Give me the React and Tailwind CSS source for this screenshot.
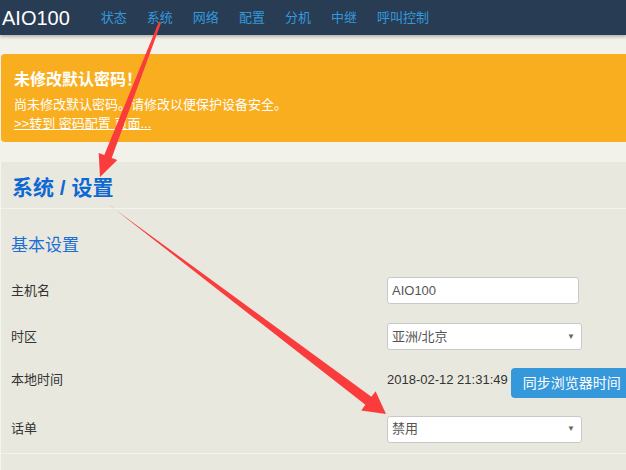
import React from 'react';

const font = { fontFamily: '"Liberation Sans", Arial, "Noto Sans CJK SC", sans-serif' };

const navItems = ['状态', '系统', '网络', '配置', '分机', '中继', '呼叫控制'];

function SelectBox({ value }) {
  return (
    <div className="w-[195px] h-[27px] bg-white border border-[#c9c9c9] rounded-[3px] flex items-center justify-between pl-[4px] pr-[6px] text-[13px] text-[#555]">
      <span>{value}</span>
      <span className="text-[8px] text-[#666]">▼</span>
    </div>
  );
}

function Row({ label, className, children, labelClass }) {
  return (
    <div className={`flex ${className}`}>
      <div className={`w-[376px] shrink-0 text-[13px] text-[#333] ${labelClass || ''}`}>{label}</div>
      {children}
    </div>
  );
}

export default function App() {
  return (
    <div className="relative w-[626px] h-[470px] overflow-hidden bg-[#f2f2eb] leading-[18px]" style={font}>
      {/* Navbar */}
      <div className="h-[35px] bg-[#283c54] shadow-[0_2px_3px_rgba(0,0,0,0.25)] flex items-center pl-[2px]">
        <div className="text-[20px] text-white leading-none">AIO100</div>
        <div className="ml-[31px] flex gap-[20px] text-[13px] text-[#3498db]">
          {navItems.map((n) => (
            <span key={n}>{n}</span>
          ))}
        </div>
      </div>

      {/* Alert */}
      <div className="mt-[19px] ml-[1px] h-[88px] bg-[#f9ae20] rounded-l-[4px] pl-[13px] pt-[15px] text-white">
        <div className="text-[16px] font-bold leading-[22px]">未修改默认密码！</div>
        <div className="mt-[4px] text-[13px] leading-[19px]">尚未修改默认密码。请修改以便保护设备安全。</div>
        <div className="text-[13px] leading-[19px] underline">&gt;&gt;转到 密码配置 页面...</div>
      </div>

      {/* Panel */}
      <div className="mt-[20px] pl-[1px] bg-[#f5f5f0]">
        <div className="bg-[#e9e8de] h-[400px]">
          <div className="h-[47px] pt-[14px] pl-[11px] border-b border-[#f4f4ee]">
            <div className="text-[21px] font-bold leading-[24px] text-[#0f69d3]">系统 / 设置</div>
          </div>
          <div className="pl-[10px]">
            <div className="mt-[27px] text-[17px] leading-[20px] text-[#1d6fd2]">基本设置</div>

            <Row label="主机名" className="mt-[21px] h-[27px] items-center">
              <div className="w-[192px] h-[27px] bg-white border border-[#c9c9c9] rounded-[3px] flex items-center pl-[4px] text-[13px] text-[#555]">
                AIO100
              </div>
            </Row>

            <Row label="时区" className="mt-[19px] h-[27px] items-center">
              <SelectBox value="亚洲/北京" />
            </Row>

            <Row label="本地时间" className="mt-[18px] h-[30px] items-start" labelClass="pt-[3px]">
              <div className="pt-[3px] text-[13px] text-[#333] whitespace-nowrap">2018-02-12 21:31:49</div>
              <div className="ml-[3px] h-[30px] bg-[#3498db] rounded-[4px] flex items-center px-[12px] text-[14px] text-white whitespace-nowrap shrink-0">
                同步浏览器时间
              </div>
            </Row>

            <Row label="话单" className="mt-[18px] h-[26px] items-center">
              <SelectBox value="禁用" />
            </Row>
          </div>
          <div className="mt-[11px] border-t border-[#f4f4ee]" />
        </div>
      </div>

      {/* Annotation arrows */}
      <svg className="absolute inset-0 pointer-events-none" width="626" height="470" viewBox="0 0 626 470">
        <polygon
          fill="#fa3c3c"
          points="160,22 161,23 111.7,158 117.3,160.1 100,177 98.7,152.9 104.3,155 159,21.5"
        />
        <polygon
          fill="#fa3c3c"
          points="110,205 111,206.5 371.4,396.8 375.6,391.2 386,414 361.2,410.4 365.4,404.8 110,205.5"
        />
      </svg>
    </div>
  );
}
